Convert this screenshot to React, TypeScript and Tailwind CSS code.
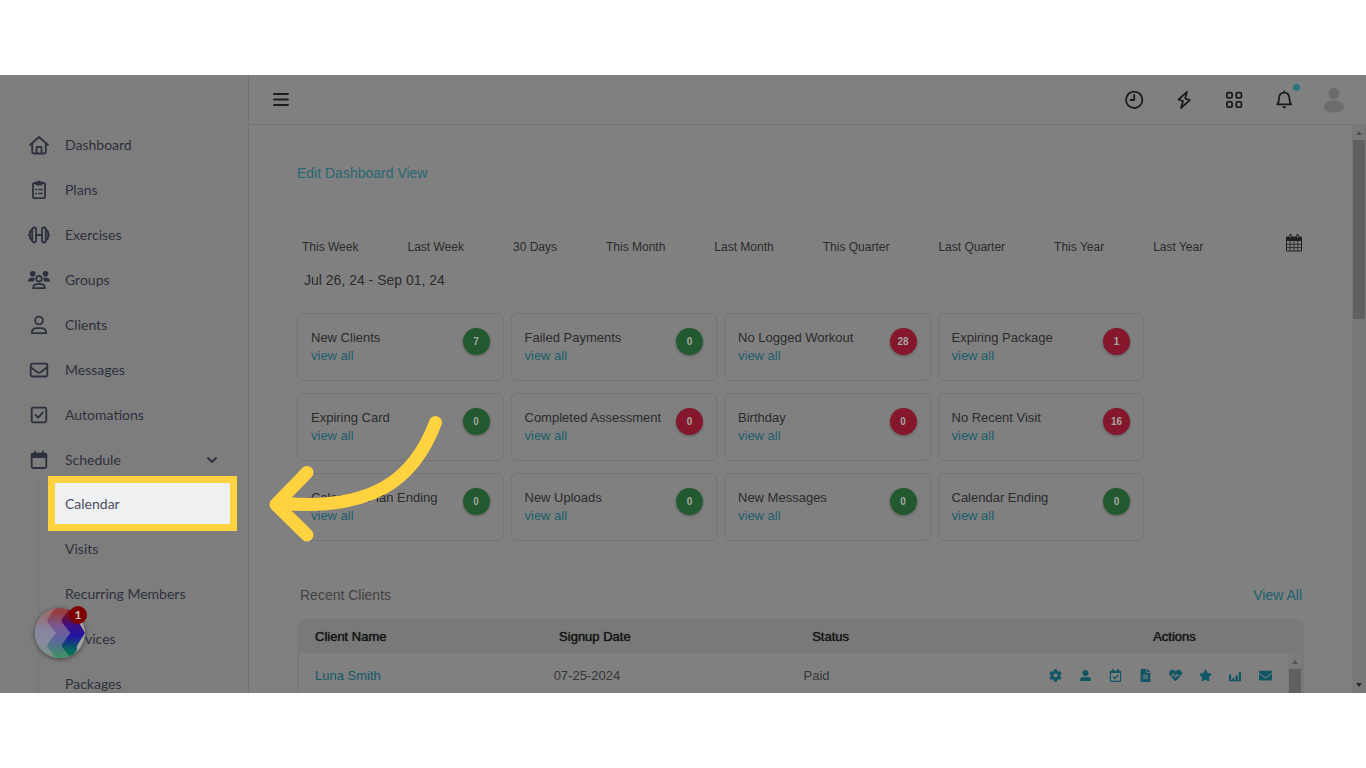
import type { ReactNode } from "react";
import { FaCog, FaEnvelope, FaFileAlt, FaHeartbeat, FaRegCalendarCheck, FaStar, FaUserAlt } from "react-icons/fa";

const NAV: { label: string; icon: ReactNode }[] = [
  {
    label: "Dashboard",
    icon: (
      <>
        <path d="M2 11 11 3l9 8" />
        <path d="M4.200 9.500V18a1.500 1.500 0 0 0 1.500 1.500h10.600a1.500 1.500 0 0 0 1.500-1.500V9.500" />
        <path d="M8.500 19v-6h5v6" />
      </>
    ),
  },
  {
    label: "Plans",
    icon: (
      <>
        <rect x="5" y="4" width="12" height="15.200" rx="1.500" />
        <path d="M8.500 5.500v-2h1.200a1.400 1.400 0 0 1 2.600 0h1.200v2z" fill="currentColor" />
        <path d="M7.700 10.500h1M10.800 10.500h3.500M7.700 14.500h1M10.800 14.500h3.500" strokeWidth="1.300" />
      </>
    ),
  },
  {
    label: "Exercises",
    icon: (
      <>
        <rect x="4.200" y="3.500" width="3.800" height="15" rx="1.900" />
        <rect x="14" y="3.500" width="3.800" height="15" rx="1.900" />
        <path d="M8 11h6M4 6C1.500 6.500 1.800 8 1.800 11s-.3 4.500 2.200 5M18 6c2.500.5 2.200 2 2.200 5s.3 4.500-2.200 5M.8 11h1M20.200 11h1" />
      </>
    ),
  },
  {
    label: "Groups",
    icon: (
      <>
        <circle cx="4.700" cy="4.700" r="2.800" fill="currentColor" stroke="none" />
        <circle cx="17.500" cy="4.700" r="2.800" fill="currentColor" stroke="none" />
        <path d="M0 12.500C0 10 1.500 8.800 3.500 8.800h3.200L6 12.500zM22 12.500c0-2.500-1.500-3.700-3.500-3.700h-3.200l.7 3.700z" fill="currentColor" stroke="none" />
        <circle cx="11" cy="9.700" r="2.800" />
        <path d="M5.200 19.200c0-2.700 1.800-4 4-4h3.600c2.200 0 4 1.300 4 4z" />
      </>
    ),
  },
  {
    label: "Clients",
    icon: (
      <>
        <circle cx="11" cy="6.500" r="3.900" />
        <path d="M3.800 19.200c0-3.300 2.200-5 5.200-5h4c3 0 5.200 1.700 5.200 5z" />
      </>
    ),
  },
  {
    label: "Messages",
    icon: (
      <>
        <rect x="2.700" y="4.700" width="16.600" height="12.800" rx="1.500" />
        <path d="m3 8.500 6.500 4.800q1.500 1 3 0L19 8.500" />
      </>
    ),
  },
  {
    label: "Automations",
    icon: (
      <>
        <rect x="3.700" y="3.700" width="14.600" height="14.600" rx="1.500" />
        <path d="m7.500 11 2.700 2.700 4.500-5" />
      </>
    ),
  },
  {
    label: "Schedule",
    icon: (
      <>
        <rect x="3.700" y="4.700" width="14.600" height="14.300" rx="1.500" />
        <path d="M3.700 5h14.600v3H3.700z" fill="currentColor" />
        <path d="M7 2.500v3M15 2.500v3" />
      </>
    ),
  },
];

const SUB_NAV = ["Visits", "Recurring Members", "Services", "Packages"];

const PERIODS = [
  "This Week",
  "Last Week",
  "30 Days",
  "This Month",
  "Last Month",
  "This Quarter",
  "Last Quarter",
  "This Year",
  "Last Year",
];

const CARDS = [
  { title: "New Clients", count: 7, ok: true },
  { title: "Failed Payments", count: 0, ok: true },
  { title: "No Logged Workout", count: 28, ok: false },
  { title: "Expiring Package", count: 1, ok: false },
  { title: "Expiring Card", count: 0, ok: true },
  { title: "Completed Assessment", count: 0, ok: false },
  { title: "Birthday", count: 0, ok: false },
  { title: "No Recent Visit", count: 16, ok: false },
  { title: "Calendar Plan Ending", count: 0, ok: true },
  { title: "New Uploads", count: 0, ok: true },
  { title: "New Messages", count: 0, ok: true },
  { title: "Calendar Ending", count: 0, ok: true },
];

const ACTIONS = [
  { label: "Settings", icon: <FaCog /> },
  {
    label: "Profile",
    icon: <FaUserAlt className="size-[11px]" />,
  },
  { label: "Book", icon: <FaRegCalendarCheck /> },
  { label: "Notes", icon: <FaFileAlt /> },
  { label: "Health", icon: <FaHeartbeat /> },
  { label: "Favorite", icon: <FaStar /> },
  {
    label: "Stats",
    icon: (
      <svg viewBox="0 0 12 12" className="size-3" fill="currentColor">
        <path d="M0 4.500h2.200V11H0zM3.300 8h2.200v3H3.300zM6.500 5.500h2.200V11H6.500zM9.800 2H12v9H9.800zM0 10h12v1.200H0z" />
      </svg>
    ),
  },
  { label: "Email", icon: <FaEnvelope /> },
];

function Line({ children, className = "size-[22px]", box = 22 }: { children: ReactNode; className?: string; box?: number }) {
  return (
    <svg
      viewBox={`0 0 ${box} ${box}`}
      className={className}
      fill="none"
      stroke="currentColor"
      strokeWidth="1.8"
      strokeLinecap="round"
      strokeLinejoin="round"
      aria-hidden="true"
    >
      {children}
    </svg>
  );
}

function Pointer() {
  return (
    <svg
      viewBox="268 414 176 129"
      className="pointer-events-none absolute -top-[69px] left-full ml-[38px] h-[129px] w-[176px]"
      fill="none"
      stroke="#ffd23f"
      strokeWidth="13"
      strokeLinecap="round"
      strokeLinejoin="round"
      aria-hidden="true"
    >
      <path d="M435.500 422.500C414 480 372 512 278 503" />
      <path d="M307 472.500 276 504.500 307 535" />
    </svg>
  );
}

function Sidebar() {
  return (
    <nav className="relative z-10 w-[249px] shrink-0 border-r border-[#737373] bg-[#7d7d7d] pt-[47px] font-[Lato,sans-serif] text-sm text-[#2d313e]">
      <ul>
        {NAV.map((item) => (
          <li key={item.label}>
            <a href="#" className="flex h-[45px] items-center gap-[15px] px-7">
              <Line>{item.icon}</Line>
              {item.label}
              {item.label === "Schedule" && (
                <Line className="ml-auto size-4" box={16}>
                  <path d="m4 6 4 4 4-4" />
                </Line>
              )}
            </a>
          </li>
        ))}
      </ul>
      <ul className="-mt-px ml-[38px] border-l border-[#747474] pl-4">
        <li className="relative flex h-[45px] items-center">
          <a
            href="#"
            className="mr-[18px] flex h-[41px] flex-1 items-center bg-[#eff0f2] pl-[10px] text-[#4b4f5e] outline-[7px] outline-[#ffd23f]"
          >
            Calendar
          </a>
          <div className="absolute top-[2px] right-[18px] h-[41px]">
            <Pointer />
          </div>
        </li>
        {SUB_NAV.map((label) => (
          <li key={label}>
            <a href="#" className="flex h-[45px] items-center pl-[10px]">
              {label}
            </a>
          </li>
        ))}
      </ul>
    </nav>
  );
}

function ChatWidget() {
  return (
    <button aria-label="Open help" className="absolute bottom-[35px] left-[35px] z-10 size-[50px] rounded-full shadow-[0_1px_5px_rgba(0,0,0,0.5)]">
      <svg viewBox="0 0 50 50" className="size-[50px] rounded-full">
        <defs>
          <linearGradient id="pale" x1="0" y1="0" x2="0" y2="1">
            <stop offset="0.1" stopColor="#9b6c6c" />
            <stop offset="0.45" stopColor="#8684a2" />
            <stop offset="0.7" stopColor="#888b9c" />
            <stop offset="1" stopColor="#6f9480" />
          </linearGradient>
          <linearGradient id="mid" x1="0" y1="0" x2="0" y2="1">
            <stop offset="0.1" stopColor="#943f42" />
            <stop offset="0.35" stopColor="#7b5890" />
            <stop offset="0.6" stopColor="#5f62a0" />
            <stop offset="1" stopColor="#3e9264" />
          </linearGradient>
          <linearGradient id="deep" x1="0" y1="0" x2="0" y2="1">
            <stop offset="0.1" stopColor="#7f0f17" />
            <stop offset="0.35" stopColor="#3d0f82" />
            <stop offset="0.55" stopColor="#2213a2" />
            <stop offset="0.85" stopColor="#056a5f" />
            <stop offset="1" stopColor="#087043" />
          </linearGradient>
        </defs>
        <path d="M0 0h50v50H0z" fill="#a3a3a3" />
        <path d="M0 0h30v50H0z" fill="url(#pale)" />
        <path d="M20 0 12.500 11q-1 2 .5 4l8 10-8 10.500q-1.500 2 0 4L21 50h20V0z" fill="url(#mid)" />
        <path d="M35 0 27 11q-1 2 .5 4l8 10-8 10.500q-1.500 2 0 4L36 50l6-8q-1-3 1-6l7-11-7-12V0z" fill="url(#deep)" />
      </svg>
      <span className="absolute -top-[2px] -right-[2px] flex size-[18px] items-center justify-center rounded-full bg-[#7d0000] font-[Lato,sans-serif] text-xs font-bold text-[#c4c4c4]">
        1
      </span>
    </button>
  );
}

function TopBar() {
  return (
    <header className="flex h-[50px] shrink-0 items-center justify-between border-b border-[#747474] pr-[7px] pl-5 text-[#1b1c20]">
      <button aria-label="Toggle menu" className="flex size-6 items-center justify-center">
        <Line className="size-6" box={24}>
          <path d="M5 6h14M5 11.500h14M5 17h14" />
        </Line>
      </button>
      <div className="flex items-center">
        <button aria-label="Recent" className="flex w-[50px] justify-center">
          <Line className="size-6" box={24}>
            <circle cx="12.200" cy="11.800" r="8.200" />
            <path d="M12.200 7v5H8.500" />
          </Line>
        </button>
        <button aria-label="Quick actions" className="flex w-[50px] justify-center">
          <Line className="size-6" box={24}>
            <path d="M15 3.800 6.500 11.500l4.500 1.700-2 6.800 8.800-7.800-4.600-1.700z" />
          </Line>
        </button>
        <button aria-label="Apps" className="flex w-[50px] justify-center">
          <Line className="size-6" box={24}>
            <rect x="4.900" y="4.600" width="5.200" height="5.200" rx="1.300" />
            <rect x="14.200" y="4.600" width="5.200" height="5.200" rx="1.300" />
            <rect x="4.900" y="13.900" width="5.200" height="5.200" rx="1.300" />
            <rect x="14.200" y="13.900" width="5.200" height="5.200" rx="1.300" />
          </Line>
        </button>
        <button aria-label="Notifications" className="relative flex w-[50px] justify-center">
          <Line className="size-6" box={24}>
            <path d="M12.200 3.500v1.200M5.200 16.300h14c-1.600-1.200-1.600-3-1.800-6-.2-3.600-2-5.600-5.200-5.600s-5 2-5.200 5.600c-.2 3-.2 4.800-1.800 6z" />
            <path d="M10.700 19a1.600 1.600 0 0 0 3 0z" fill="currentColor" strokeWidth="0.800" />
          </Line>
          <span className="absolute -top-1 right-[9px] size-[7px] rounded-full bg-[#2a7383]" />
        </button>
        <button aria-label="Account" className="flex w-[50px] justify-center">
          <svg viewBox="0 0 24 28" className="h-7 w-6" fill="#6c6c6c">
            <ellipse cx="12" cy="7.500" rx="5.300" ry="6" />
            <path d="M2 21c0-4 4.200-6.500 10-6.500s10 2.500 10 6.500-4.200 5.500-10 5.500-10-1.500-10-5.500z" />
          </svg>
        </button>
      </div>
    </header>
  );
}

function StatCard({ title, count, ok }: { title: string; count: number; ok: boolean }) {
  return (
    <div className="flex h-[68px] justify-between rounded-md border border-[#747474] px-[13px] pt-[14px]">
      <div className="pt-px leading-[18px]">
        <p>{title}</p>
        <a href="#" className="text-[#1d5f6c]">
          view all
        </a>
      </div>
      <span
        className={`flex size-[27px] items-center justify-center rounded-full text-[10px] font-bold text-[#a5a5a5] shadow-[0_1px_3px_rgba(0,0,0,0.3)] ${
          ok ? "bg-[#23592f]" : "bg-[#84172b]"
        }`}
      >
        {count}
      </span>
    </div>
  );
}

function RecentClients() {
  return (
    <section className="mt-[45px]">
      <div className="flex h-[18px] items-center justify-between pr-[2px] pl-[3px] text-sm">
        <h2 className="text-[#424242]">Recent Clients</h2>
        <a href="#" className="text-[#1d5f6c]">
          View All
        </a>
      </div>
      <div className="relative mt-[15px] h-[200px] overflow-hidden rounded-lg border-2 border-[#797979]">
        <table className="w-full table-fixed text-center">
          <thead className="bg-[#797979] text-[#151515]">
            <tr className="h-8">
              <th className="w-[18%] pl-4 text-left font-medium [text-shadow:0_0_1px_#151515]">Client Name</th>
              <th className="w-[23%] font-medium [text-shadow:0_0_1px_#151515]">Signup Date</th>
              <th className="w-[24%] font-medium [text-shadow:0_0_1px_#151515]">Status</th>
              <th className="w-[35%] pl-24 font-medium [text-shadow:0_0_1px_#151515]">Actions</th>
            </tr>
          </thead>
          <tbody className="text-[#373737]">
            <tr className="h-[45px]">
              <td className="pl-4 text-left">
                <a href="#" className="text-[#11596a]">
                  Luna Smith
                </a>
              </td>
              <td className="pr-4">07-25-2024</td>
              <td className="pr-7">Paid</td>
              <td className="pr-[22px]">
                <div className="flex justify-end text-[13px] text-[#125665]">
                  {ACTIONS.map((a) => (
                    <button key={a.label} aria-label={a.label} className="flex w-[30px] items-center justify-center">
                      {a.icon}
                    </button>
                  ))}
                </div>
              </td>
            </tr>
          </tbody>
        </table>
        <div className="absolute top-8 right-0 bottom-0 flex w-[14px] flex-col items-center bg-[#7b7b7b]">
          <span className="mt-[7px] mb-[5px] border-x-3 border-b-4 border-x-transparent border-b-[#515151]" />
          <span className="w-3 flex-1 bg-[#606060]" />
        </div>
      </div>
    </section>
  );
}

export default function App() {
  return (
    <div className="h-screen bg-white py-[75px]">
      <div className="relative flex h-full overflow-hidden bg-[#808080] font-['Liberation_Sans',Arial,sans-serif] text-[13px] text-[#2b2b2b]">
        <Sidebar />
        <ChatWidget />
        <div className="flex min-w-0 flex-1 flex-col">
          <TopBar />
          <div className="flex min-h-0 flex-1">
            <main className="min-w-0 flex-1 overflow-hidden px-12 pt-[39px]">
              <a href="#" className="block h-[18px] text-sm leading-[18px] text-[#286773]">
                Edit Dashboard View
              </a>
              <div className="mt-[53px] flex justify-between pr-[2px] pl-[5px]">
                <div className="flex h-6 items-center gap-[49px] text-xs">
                  {PERIODS.map((p) => (
                    <a key={p} href="#" className="whitespace-nowrap">
                      {p}
                    </a>
                  ))}
                </div>
                <button aria-label="Pick dates" className="flex h-4 items-center">
                  <svg viewBox="0 0 16 18" className="h-[18px] w-4" fill="none" stroke="#202020">
                    <path d="M.5 3.500h15v13.500H.5z" />
                    <path d="M.5 3h15v3.500H.5z" fill="#202020" />
                    <path d="M4.200 7v10M8 7v10M11.800 7v10M.5 10.300h15M.5 13.600h15" strokeWidth="0.8" />
                    <path d="M4.500 1v3.500M11.500 1v3.500" strokeWidth="2.200" strokeLinecap="round" />
                    <path d="M4.500 1.500v2.500M11.500 1.500v2.500" stroke="#777777" strokeWidth="0.800" />
                  </svg>
                </button>
              </div>
              <p className="mt-3 pl-[7px] text-sm leading-[18px]">Jul 26, 24 - Sep 01, 24</p>
              <div className="mt-6 grid max-w-[847px] grid-cols-4 gap-x-[7px] gap-y-3">
                {CARDS.map((c) => (
                  <StatCard key={c.title} {...c} />
                ))}
              </div>
              <RecentClients />
            </main>
            <div className="flex w-[14px] shrink-0 flex-col items-center justify-between bg-[#787878] py-[6px]">
              <div className="flex flex-col items-center">
                <span className="mb-[5px] border-x-3 border-b-4 border-x-transparent border-b-[#515151]" />
                <span className="h-[179px] w-3 bg-[#606060]" />
              </div>
              <span className="border-x-3 border-t-4 border-x-transparent border-t-[#252525]" />
            </div>
          </div>
        </div>
      </div>
    </div>
  );
}
